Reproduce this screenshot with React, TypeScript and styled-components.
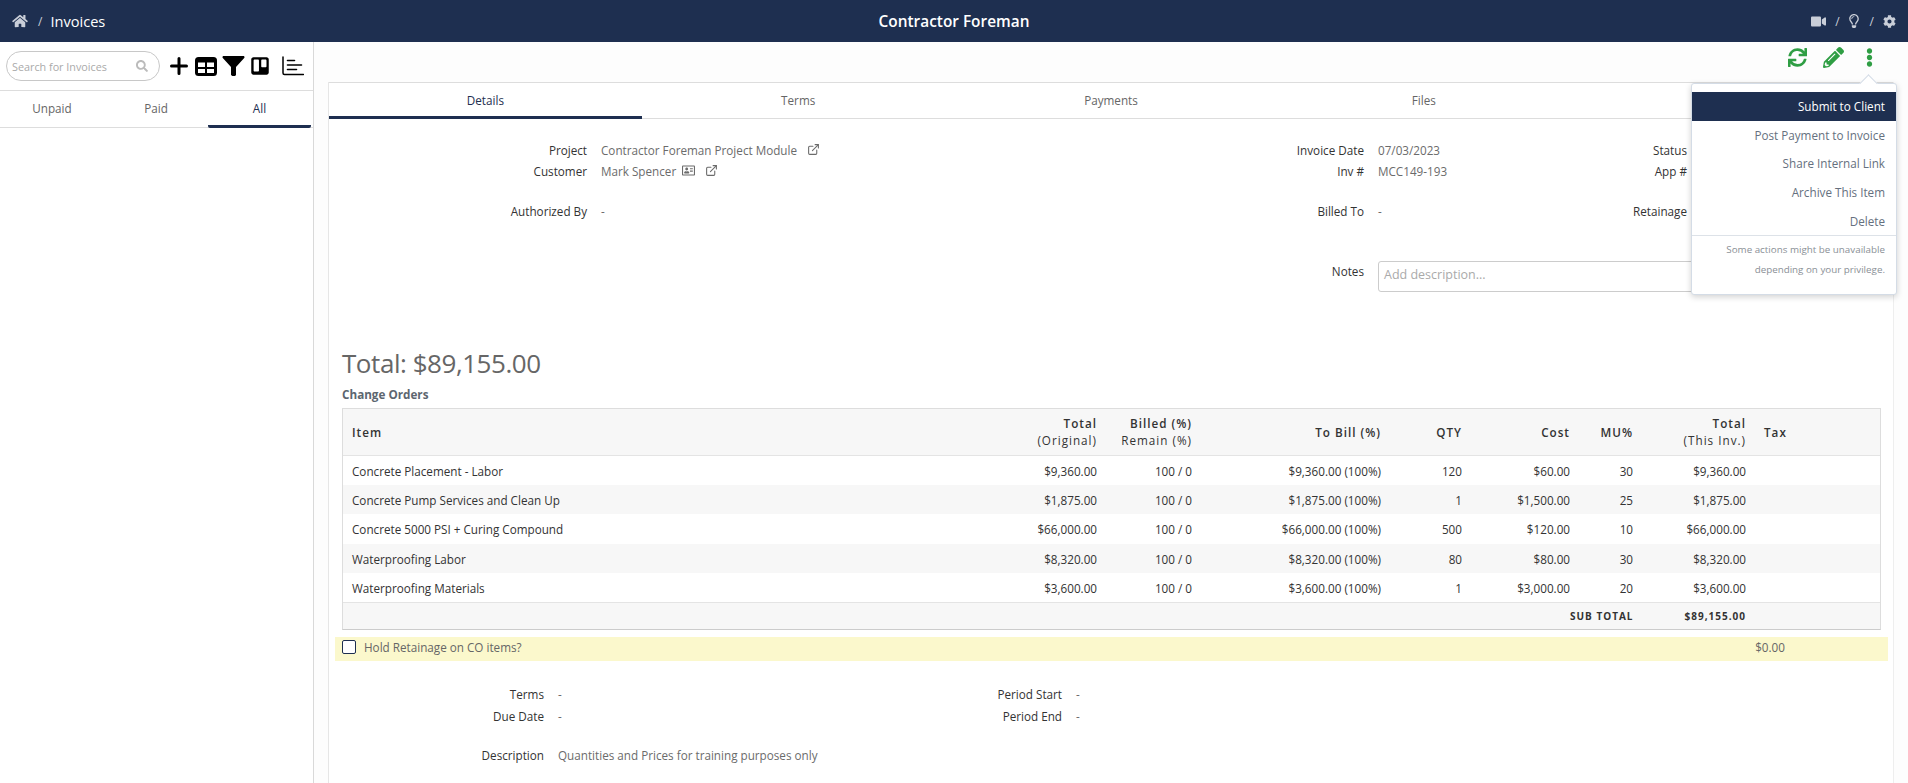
import React from 'react';
import styled, { createGlobalStyle } from 'styled-components';
import {
  FaCog,
  FaEllipsisV,
  FaHome,
  FaPencilAlt,
  FaRegAddressCard,
  FaRegLightbulb,
  FaSearch,
  FaSync,
  FaTrello,
  FaVideo,
} from 'react-icons/fa';
import { FiExternalLink } from 'react-icons/fi';

const navy = '#1e2f50';
const green = '#2f9e44';

const GlobalStyle = createGlobalStyle`
  html, body {
    margin: 0;
    padding: 0;
    height: 100%;
    background: #fff;
  }
  body {
    font-family: "Open Sans", "Noto Sans", sans-serif;
    font-size: 11.7px;
    color: #333;
  }
  * {
    box-sizing: border-box;
  }
`;

const Page = styled.div`
  height: 100vh;
  overflow: hidden;
  display: flex;
  flex-direction: column;
`;

const TopBar = styled.header`
  flex: 0 0 42px;
  background: ${navy};
  color: #fff;
  display: grid;
  grid-template-columns: 1fr auto 1fr;
  align-items: center;
  padding: 0 12px;
`;

const Crumbs = styled.div`
  display: flex;
  align-items: center;
  font-size: 14.6px;
  color: #fff;
`;

const HomeIcon = styled(FaHome)`
  width: 16px;
  height: 14px;
  color: #c9ced8;
`;

const Slash = styled.span`
  color: #c9ced8;
  font-size: 12px;
  margin: 0 8px 0 10px;
`;

const Brand = styled.div`
  font-size: 15.4px;
  font-weight: 600;
`;

const TopIcons = styled.div`
  display: flex;
  justify-content: flex-end;
  align-items: center;
  color: #c9ced8;
  font-size: 13px;
`;

const TopSlash = styled.span<{ $right: number }>`
  color: #c9ced8;
  font-size: 12px;
  margin: 0 ${(p) => p.$right}px 0 9px;
`;

const Body = styled.div`
  flex: 1;
  display: flex;
  min-height: 0;
`;

const Sidebar = styled.aside`
  flex: 0 0 314px;
  border-right: 1px solid #d9d9d9;
`;

const SideTools = styled.div`
  height: 48px;
  display: flex;
  align-items: center;
  padding: 0 0 0 6px;
`;

const SearchBox = styled.div`
  width: 154px;
  height: 30px;
  border: 1px solid #c8c8c8;
  border-radius: 15px;
  display: flex;
  align-items: center;
  justify-content: space-between;
  padding: 0 11px 0 5px;
  color: #aaa;
  font-size: 10.8px;
  margin-right: 10px;
`;

const ToolIcon = styled.span<{ $width: number; $gap: number }>`
  display: flex;
  align-items: center;
  justify-content: center;
  width: ${(p) => p.$width}px;
  margin-right: ${(p) => p.$gap}px;
  color: #000;
`;

const SideTabs = styled.div`
  display: grid;
  grid-template-columns: 104px 104px 103px;
  height: 38px;
  border-top: 1px solid #ddd;
  border-bottom: 1px solid #ddd;
`;

const SideTab = styled.div<{ $active?: boolean }>`
  display: flex;
  align-items: center;
  justify-content: center;
  color: ${(p) => (p.$active ? navy : '#666')};
  border-bottom: 3px solid ${(p) => (p.$active ? navy : 'transparent')};
  margin-bottom: -1px;
  border-radius: 0 0 2px 2px;
`;

const Main = styled.main`
  flex: 1;
  min-width: 0;
  padding: 0 14px;
  position: relative;
  display: flex;
  flex-direction: column;
  background: #fdfdfd;
`;

const ActionBar = styled.div`
  flex: 0 0 40px;
  display: flex;
  align-items: center;
  justify-content: flex-end;
  color: ${green};
  padding: 0 15px 10px 0;
`;

const ActionIcon = styled.span`
  display: flex;
  margin-left: 16px;
`;

const Panel = styled.div`
  flex: 1;
  background: #fff;
  border-left: 1px solid #e6e6e6;
  border-right: 1px solid #eee;
`;

const TabBar = styled.div`
  display: grid;
  grid-template-columns: repeat(5, 1fr);
  height: 37px;
  border-top: 1px solid #ddd;
  border-bottom: 1px solid #ddd;
`;

const TabItem = styled.div<{ $active?: boolean }>`
  display: flex;
  align-items: center;
  justify-content: center;
  padding-top: 1px;
  color: ${(p) => (p.$active ? navy : '#666')};
  border-bottom: 3px solid ${(p) => (p.$active ? navy : 'transparent')};
  margin-bottom: -1px;
`;

const Details = styled.section`
  padding-top: 20px;
`;

const DetailRow = styled.div<{ $top?: number }>`
  display: grid;
  grid-template-columns: 258px 495px 254px 108px 187px 1fr;
  column-gap: 14px;
  height: 21px;
  align-items: center;
  margin-top: ${(p) => p.$top || 0}px;
`;

const Label = styled.div`
  text-align: right;
  color: #333;
  white-space: nowrap;
`;

const Value = styled.div`
  display: flex;
  align-items: center;
  color: #6b6b6b;
  white-space: nowrap;
`;

const InlineIcon = styled.span<{ $left: number }>`
  display: flex;
  margin-left: ${(p) => p.$left}px;
  color: #6b6b6b;
`;

const NotesRow = styled.div`
  display: grid;
  grid-template-columns: 1035px 1fr;
  column-gap: 14px;
  margin: 40px 13px 0 0;
`;

const NotesLabel = styled(Label)`
  padding-top: 2px;
`;

const NotesBox = styled.div`
  height: 31px;
  border: 1px solid #ccc;
  border-radius: 3px;
  color: #aaa;
  font-size: 12.5px;
  padding: 4px 5px;
`;

const Total = styled.h2`
  margin: 53px 0 0 13px;
  font-size: 26px;
  letter-spacing: -0.45px;
  line-height: 36px;
  font-weight: 400;
  color: #666;
`;

const SectionTitle = styled.div`
  margin: 4px 0 0 13px;
  line-height: 18px;
  font-weight: 700;
  color: #5c6670;
`;

const Table = styled.div`
  margin: 5px 12px 0 13px;
  border: 1px solid #ddd;
  border-bottom: 1px solid #ccc;
`;

const TableRow = styled.div<{ $height: number; $striped?: boolean }>`
  display: grid;
  grid-template-columns: 660px 94px 95px 189px 81px 108px 63px 113px 1fr;
  align-items: center;
  height: ${(p) => p.$height}px;
  background: ${(p) => (p.$striped ? '#f7f7f7' : '#fff')};
`;

const HeadRow = styled(TableRow)`
  border-bottom: 1px solid #e4e4e4;
`;

const FootRow = styled(TableRow)`
  border-top: 1px solid #e4e4e4;
`;

const Cell = styled.div`
  text-align: right;
  color: #333;
  white-space: nowrap;
`;

const ItemCell = styled(Cell)`
  text-align: left;
  padding-left: 9px;
`;

const HeadCell = styled(Cell)`
  font-weight: 600;
  letter-spacing: 1px;
  font-size: 11.7px;
  line-height: 17px;
`;

const HeadItem = styled(HeadCell)`
  text-align: left;
  padding-left: 9px;
`;

const HeadTax = styled(HeadCell)`
  text-align: left;
  padding-left: 18px;
`;

const HeadSub = styled.div`
  font-weight: 400;
`;

const FootCell = styled(Cell)`
  font-weight: 700;
  font-size: 10px;
  letter-spacing: 1px;
`;

const Retainage = styled.div`
  margin: 7px 5px 0 6px;
  height: 24px;
  background: #fbf8cc;
  display: grid;
  grid-template-columns: 1fr auto;
  align-items: center;
  padding: 0 103px 4px 7px;
  color: #666;
`;

const CheckRow = styled.label`
  display: flex;
  align-items: center;
`;

const CheckBox = styled.span`
  width: 14px;
  height: 14px;
  border: 1px solid ${navy};
  border-radius: 2px;
  background: #fff;
  margin-right: 8px;
`;

const InfoGrid = styled.div`
  margin-top: 22px;
  display: grid;
  grid-template-columns: 215px 357px 133px 1fr;
  grid-auto-rows: 22px;
  column-gap: 14px;
  align-items: center;
`;

const DescriptionRow = styled.div`
  margin-top: 17px;
  display: grid;
  grid-template-columns: 215px 1fr;
  column-gap: 14px;
  height: 22px;
  align-items: center;
`;

const Menu = styled.div`
  position: absolute;
  top: 41px;
  right: 11px;
  width: 206px;
  height: 212px;
  background: #fff;
  border: 1px solid #d4dce6;
  border-radius: 3px;
  box-shadow: 0 2px 6px rgba(0, 0, 0, 0.18);
  padding-top: 8px;
  &::before {
    content: '';
    position: absolute;
    top: -7px;
    right: 21px;
    width: 12px;
    height: 12px;
    background: #fff;
    border-top: 1px solid #d4dce6;
    border-left: 1px solid #d4dce6;
    transform: rotate(45deg);
  }
`;

const MenuItem = styled.div<{ $active?: boolean }>`
  position: relative;
  height: 28.8px;
  display: flex;
  align-items: center;
  justify-content: flex-end;
  padding: 0 11px 1px 0;
  color: ${(p) => (p.$active ? '#fff' : '#65707e')};
  background: ${(p) => (p.$active ? navy : 'transparent')};
`;

const MenuNote = styled.div`
  border-top: 1px solid #dde2e8;
  margin-top: -1px;
  padding: 4px 11px 0 0;
  text-align: right;
  font-size: 9.8px;
  line-height: 20px;
  color: #8a8f96;
`;

const PlusIcon = () => (
  <svg width="18" height="18" viewBox="0 0 18 18" fill="none" stroke="#000" strokeWidth="3" strokeLinecap="round">
    <path d="M9 1.5v15M1.5 9h15" />
  </svg>
);

const GridIcon = () => (
  <svg width="22" height="19" viewBox="0 0 22 19">
    <rect width="22" height="19" rx="3.5" fill="#000" />
    <path d="M3 5.5h7v4.5H3zM12 5.5h7v4.5h-7zM3 12h7v4H3zM12 12h7v4h-7z" fill="#fff" />
  </svg>
);

const FunnelIcon = () => (
  <svg width="23" height="20" viewBox="0 0 23 20">
    <path d="M0.5 1.2c0-.7.5-1.2 1.2-1.2h19.6c.7 0 1.2.5 1.2 1.2 0 .3-.1.6-.3.8L14 11v8l-1 1h-2.6L9 19v-8L.8 2c-.2-.2-.3-.5-.3-.8z" fill="#000" />
  </svg>
);

const ChartIcon = () => (
  <svg width="22" height="20" viewBox="0 0 22 20" fill="none" stroke="#000" strokeLinecap="round">
    <path d="M1 1v16a1.5 1.5 0 0 0 1.5 1.5h19" strokeWidth="1.5" />
    <path d="M5.5 4.5h7M5.5 9h14M5.5 13.5h9" strokeWidth="1.6" />
  </svg>
);

const rows = [
  ['Concrete Placement - Labor', '$9,360.00', '100 / 0', '$9,360.00 (100%)', '120', '$60.00', '30', '$9,360.00', 29],
  ['Concrete Pump Services and Clean Up', '$1,875.00', '100 / 0', '$1,875.00 (100%)', '1', '$1,500.00', '25', '$1,875.00', 29],
  ['Concrete 5000 PSI + Curing Compound', '$66,000.00', '100 / 0', '$66,000.00 (100%)', '500', '$120.00', '10', '$66,000.00', 30],
  ['Waterproofing Labor', '$8,320.00', '100 / 0', '$8,320.00 (100%)', '80', '$80.00', '30', '$8,320.00', 29],
  ['Waterproofing Materials', '$3,600.00', '100 / 0', '$3,600.00 (100%)', '1', '$3,000.00', '20', '$3,600.00', 29],
] as const;

export default function App() {
  return (
    <Page>
      <GlobalStyle />
      <TopBar>
        <Crumbs>
          <HomeIcon />
          <Slash>/</Slash>
          Invoices
        </Crumbs>
        <Brand>Contractor Foreman</Brand>
        <TopIcons>
          <FaVideo size={15} />
          <TopSlash $right={7}>/</TopSlash>
          <FaRegLightbulb size={14} />
          <TopSlash $right={9}>/</TopSlash>
          <FaCog size={13} />
        </TopIcons>
      </TopBar>
      <Body>
        <Sidebar>
          <SideTools>
            <SearchBox>
              Search for Invoices
              <FaSearch size={12} color="#bbb" />
            </SearchBox>
            <ToolIcon $width={18} $gap={7}><PlusIcon /></ToolIcon>
            <ToolIcon $width={22} $gap={5}><GridIcon /></ToolIcon>
            <ToolIcon $width={23} $gap={5}><FunnelIcon /></ToolIcon>
            <ToolIcon $width={20} $gap={12}><FaTrello size={20} /></ToolIcon>
            <ToolIcon $width={22} $gap={0}><ChartIcon /></ToolIcon>
          </SideTools>
          <SideTabs>
            <SideTab>Unpaid</SideTab>
            <SideTab>Paid</SideTab>
            <SideTab $active>All</SideTab>
          </SideTabs>
        </Sidebar>
        <Main>
          <ActionBar>
            <ActionIcon><FaSync size={19} /></ActionIcon>
            <ActionIcon><FaPencilAlt size={21} /></ActionIcon>
            <ActionIcon><FaEllipsisV size={19} /></ActionIcon>
          </ActionBar>
          <Panel>
            <TabBar>
              <TabItem $active>Details</TabItem>
              <TabItem>Terms</TabItem>
              <TabItem>Payments</TabItem>
              <TabItem>Files</TabItem>
              <TabItem />
            </TabBar>
            <Details>
              <DetailRow>
                <Label>Project</Label>
                <Value>
                  Contractor Foreman Project Module
                  <InlineIcon $left={10}><FiExternalLink size={13} /></InlineIcon>
                </Value>
                <Label>Invoice Date</Label>
                <Value>07/03/2023</Value>
                <Label>Status</Label>
              </DetailRow>
              <DetailRow>
                <Label>Customer</Label>
                <Value>
                  Mark Spencer
                  <InlineIcon $left={6}><FaRegAddressCard size={13} /></InlineIcon>
                  <InlineIcon $left={10}><FiExternalLink size={13} /></InlineIcon>
                </Value>
                <Label>Inv #</Label>
                <Value>MCC149-193</Value>
                <Label>App #</Label>
              </DetailRow>
              <DetailRow $top={19}>
                <Label>Authorized By</Label>
                <Value>-</Value>
                <Label>Billed To</Label>
                <Value>-</Value>
                <Label>Retainage</Label>
              </DetailRow>
              <NotesRow>
                <NotesLabel>Notes</NotesLabel>
                <NotesBox>Add description...</NotesBox>
              </NotesRow>
            </Details>
            <Total>Total: $89,155.00</Total>
            <SectionTitle>Change Orders</SectionTitle>
            <Table>
              <HeadRow $height={47} $striped>
                <HeadItem>Item</HeadItem>
                <HeadCell>Total<HeadSub>(Original)</HeadSub></HeadCell>
                <HeadCell>Billed (%)<HeadSub>Remain (%)</HeadSub></HeadCell>
                <HeadCell>To Bill (%)</HeadCell>
                <HeadCell>QTY</HeadCell>
                <HeadCell>Cost</HeadCell>
                <HeadCell>MU%</HeadCell>
                <HeadCell>Total<HeadSub>(This Inv.)</HeadSub></HeadCell>
                <HeadTax>Tax</HeadTax>
              </HeadRow>
              {rows.map((r, i) => (
                <TableRow key={r[0]} $height={r[8]} $striped={i % 2 === 1}>
                  <ItemCell>{r[0]}</ItemCell>
                  {r.slice(1, 8).map((c, j) => (
                    <Cell key={j}>{c}</Cell>
                  ))}
                </TableRow>
              ))}
              <FootRow $height={27} $striped>
                <span />
                <span />
                <span />
                <span />
                <span />
                <span />
                <FootCell>SUB TOTAL</FootCell>
                <FootCell>$89,155.00</FootCell>
              </FootRow>
            </Table>
            <Retainage>
              <CheckRow>
                <CheckBox />
                Hold Retainage on CO items?
              </CheckRow>
              <span>$0.00</span>
            </Retainage>
            <InfoGrid>
              <Label>Terms</Label>
              <Value>-</Value>
              <Label>Period Start</Label>
              <Value>-</Value>
              <Label>Due Date</Label>
              <Value>-</Value>
              <Label>Period End</Label>
              <Value>-</Value>
            </InfoGrid>
            <DescriptionRow>
              <Label>Description</Label>
              <Value>Quantities and Prices for training purposes only</Value>
            </DescriptionRow>
          </Panel>
          <Menu>
            <MenuItem $active>Submit to Client</MenuItem>
            <MenuItem>Post Payment to Invoice</MenuItem>
            <MenuItem>Share Internal Link</MenuItem>
            <MenuItem>Archive This Item</MenuItem>
            <MenuItem>Delete</MenuItem>
            <MenuNote>
              Some actions might be unavailable
              <br />
              depending on your privilege.
            </MenuNote>
          </Menu>
        </Main>
      </Body>
    </Page>
  );
}
